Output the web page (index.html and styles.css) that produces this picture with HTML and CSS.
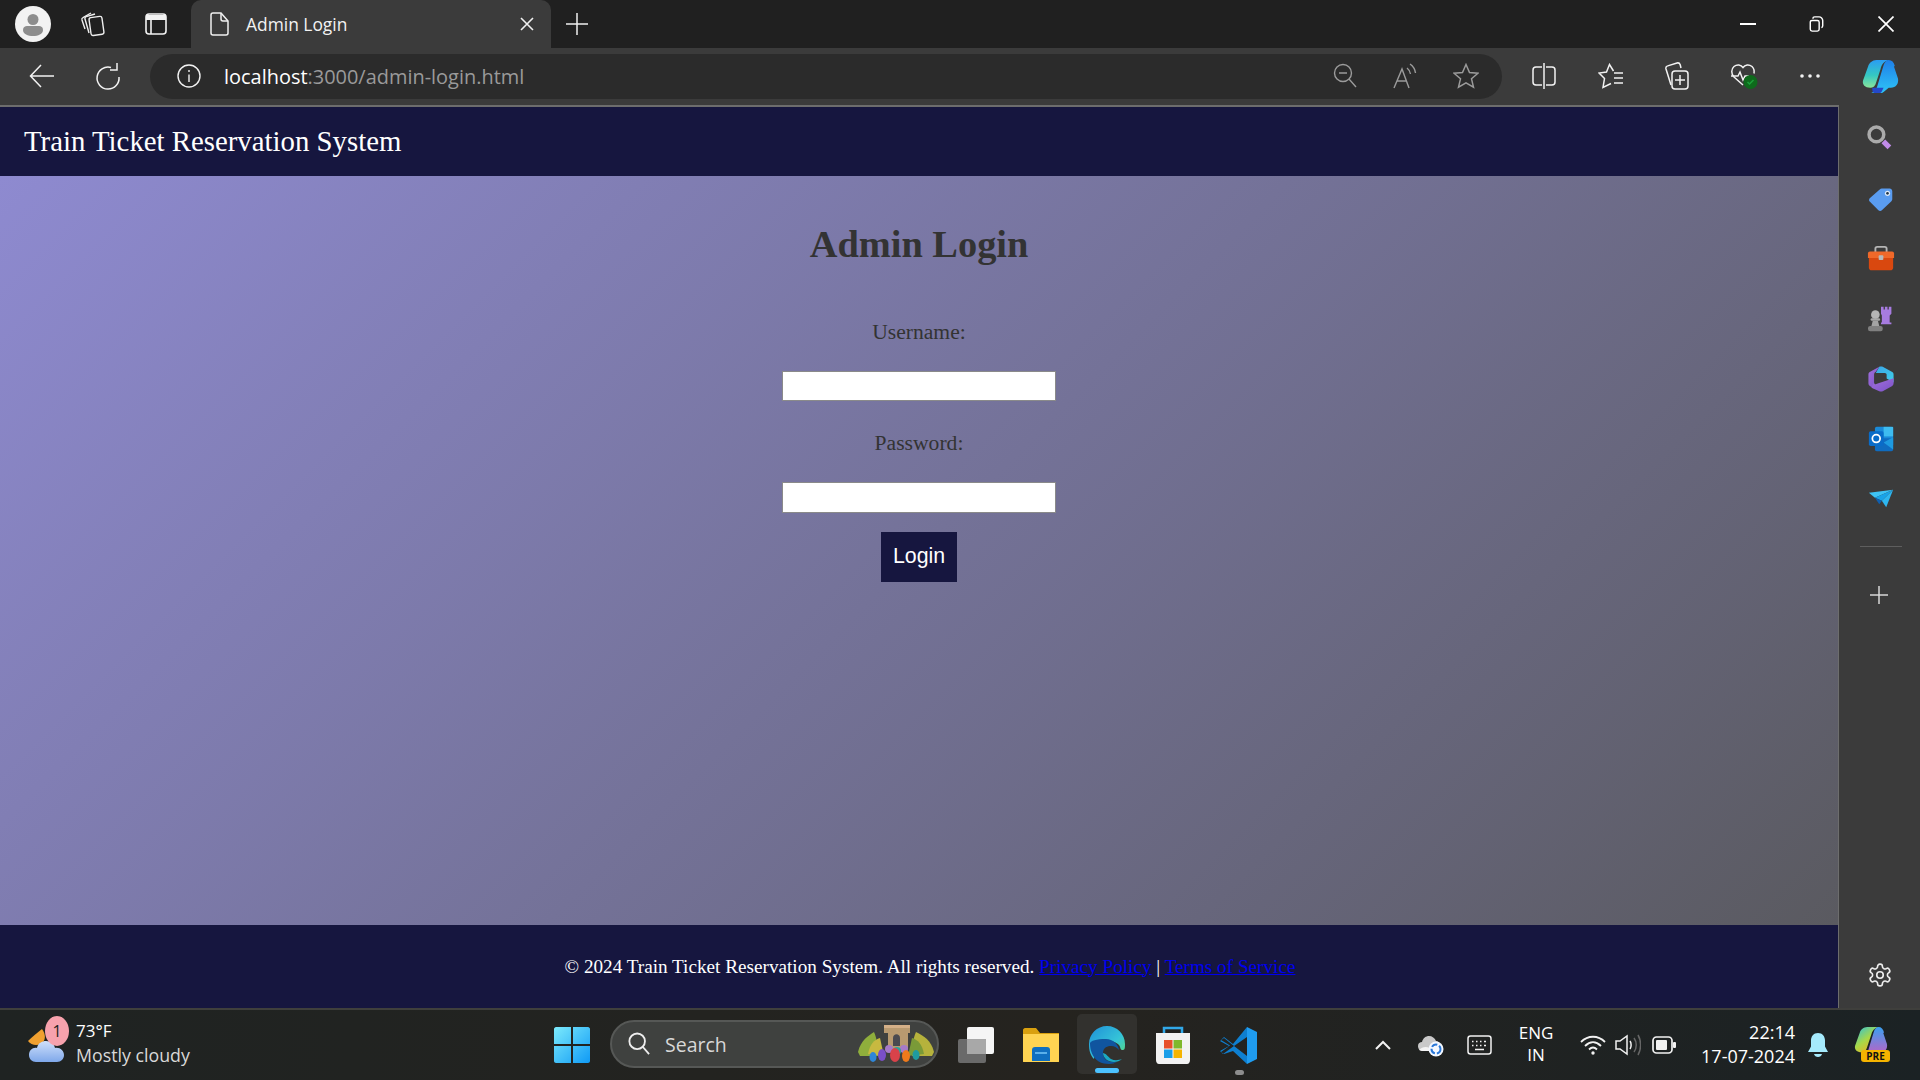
FILE: index.html
```html
<!DOCTYPE html>
<html lang="en">
<head>
<meta charset="utf-8">
<title>Admin Login</title>
<link rel="stylesheet" href="styles.css">
</head>
<body>
<header class="tabstrip">
  <span class="slot profile"><svg width="36" height="36" viewBox="0 0 36 36"><circle cx="18" cy="18" r="18" fill="#f2f2f2"/><circle cx="18" cy="13.5" r="5.5" fill="#8d8d8d"/><path d="M8 24c0-3 2-4 4-4h12c2 0 4 1 4 4 0 4-5 6-10 6s-10-2-10-6z" fill="#8d8d8d"/></svg></span>
  <span class="slot workspaces"><svg width="26" height="28" viewBox="0 0 26 28" fill="none" stroke="#eee" stroke-width="1.4"><rect x="10" y="7" width="13" height="18" rx="2" transform="rotate(-8 16 16)"/><path d="M9 23 5 9c-.3-1 .2-2 1.200-2.300L15 4"/><path d="M5 19 2 10c-.3-1 .1-2 1-2.400L11 3"/></svg></span>
  <span class="slot tabactions"><svg width="24" height="26" viewBox="0 0 24 26" fill="none" stroke="#f2f2f2" stroke-width="1.600"><rect x="2" y="3" width="20" height="20" rx="3"/><path d="M2 6.500h20" stroke-width="5"/><path d="M7 8v15"/></svg></span>
  <div class="tab">
    <svg class="tab-file" width="20" height="26" viewBox="0 0 20 26" fill="none" stroke="#f0f0f0" stroke-width="1.500"><path d="M3 2h8l7 8v12c0 1.200-.8 2-2 2H3c-1.200 0-2-.8-2-2V4c0-1.200.8-2 2-2z"/><path d="M11 2v6c0 1.200.8 2 2 2h5"/></svg>
    <span class="tab-title">Admin Login</span>
    <svg class="tab-close" width="14" height="14" viewBox="0 0 14 14" stroke="#f0f0f0" stroke-width="1.600"><path d="M1 1l12 12M13 1 1 13"/></svg>
  </div>
  <span class="slot newtab"><svg width="22" height="22" viewBox="0 0 22 22" stroke="#f0f0f0" stroke-width="1.500"><path d="M11 0v22M0 11h22"/></svg></span>
  <span class="slot caption cap-min"><svg width="16" height="2" viewBox="0 0 16 2"><path d="M0 1h16" stroke="#fff" stroke-width="2"/></svg></span>
  <span class="slot caption"><svg width="15" height="16" viewBox="0 0 16 18" fill="none" stroke="#fff" stroke-width="1.600"><rect x="1" y="5" width="10" height="12" rx="2"/><path d="M4 3c0-1 1-2 2-2h5c2 0 4 2 4 4v6c0 1-.5 2-1.500 2"/></svg></span>
  <span class="slot caption"><svg width="16" height="16" viewBox="0 0 16 16" stroke="#fff" stroke-width="1.700"><path d="M.5.5l15 15M15.500.5l-15 15"/></svg></span>
</header>

<nav class="toolbar">
  <span class="slot back"><svg width="26" height="24" viewBox="0 0 26 24" fill="none" stroke="#f2f2f2" stroke-width="1.500"><path d="M25 12H2M12 1 1.500 12 12 23"/></svg></span>
  <span class="slot reload"><svg width="26" height="28" viewBox="0 0 26 28" fill="none" stroke="#f2f2f2" stroke-width="1.500"><path d="M16 5.500A11 11 0 1 0 24 15"/><path d="M22 1v7h-7"/></svg></span>
  <div class="address">
    <svg class="addr-info" width="24" height="24" viewBox="0 0 24 24" fill="none" stroke="#f2f2f2" stroke-width="1.400"><circle cx="12" cy="12" r="11"/><path d="M12 10.500V18M12 6v2"/></svg>
    <span class="url"><span class="url-host">localhost</span>:3000/admin-login.html</span>
    <svg class="addr-zoom" width="24" height="26" viewBox="0 0 24 26" fill="none" stroke="#9b9b9b" stroke-width="1.400"><circle cx="10" cy="10" r="8.500"/><path d="M6 10h8M16 16l7 8"/></svg>
    <svg class="addr-read" width="26" height="26" viewBox="0 0 26 26" fill="none" stroke="#9b9b9b" stroke-width="1.400"><path d="M1 25 9 6l7 19M4 18h9"/><path d="M14 5c2 1.500 3 3 3.500 6M17 1c3 2 5 5 5.500 9"/></svg>
    <svg class="addr-star" width="26" height="26" viewBox="0 0 26 26" fill="none" stroke="#9b9b9b" stroke-width="1.500"><path d="m13 1.500 3.500 8 8.500.7-6.500 5.600 2 8.400-7.500-4.400-7.500 4.400 2-8.400L1 10.200l8.500-.7z"/></svg>
  </div>
  <span class="slot split"><svg width="24" height="26" viewBox="0 0 24 26" fill="none" stroke="#f2f2f2" stroke-width="1.500"><path d="M10 4H4c-1.600 0-3 1-3 3v12c0 2 1.400 3 3 3h6M14 4h6c1.600 0 3 1 3 3v12c0 2-1.400 3-3 3h-6"/><path d="M12 0v26"/></svg></span>
  <span class="slot tool"><svg width="26" height="26" viewBox="0 0 26 26" fill="none" stroke="#f2f2f2" stroke-width="1.500"><path d="M15.500 8 11.500 1.500 8.500 9 1 10l5.500 5.500L5 24.500l8-4"/><path d="M16 10h9M16 15h9M16 20h9"/></svg></span>
  <span class="slot tool"><svg width="26" height="28" viewBox="0 0 26 28" fill="none" stroke="#f2f2f2" stroke-width="1.500"><path d="M7 23 2 7c-.4-1.500.3-2.700 1.700-3.100L13 1c1.500-.4 2.700.4 3.200 1.700L17 6"/><rect x="8" y="9" width="16" height="18" rx="3"/><path d="M16 13v10M11 18h10"/></svg></span>
  <span class="slot tool"><svg width="28" height="28" viewBox="0 0 28 28" fill="none" stroke="#f2f2f2" stroke-width="1.500"><path d="M13 23 4 15C1 12 1 7 4 4.500s7-2 9 1c2-3 6-3.500 9-1 2 2 2.500 4.500 2 7"/><path d="M1 14h7l2-4 3 8 2-4h4"/><circle cx="20.500" cy="20" r="7" fill="#0e6a1c" stroke="none"/><path d="m17.500 20 2 2 4-4" stroke="#1ca03a"/></svg></span>
  <span class="slot tool"><svg width="20" height="4" viewBox="0 0 20 4" fill="#f2f2f2"><circle cx="2" cy="2" r="1.800"/><circle cx="10" cy="2" r="1.800"/><circle cx="18" cy="2" r="1.800"/></svg></span>
  <span class="slot copilot"><svg width="37" height="33" viewBox="0 0 36 32"><defs><linearGradient id="cpa" x1="0" y1="0" x2="0" y2="1"><stop offset="0" stop-color="#2a9df4"/><stop offset=".55" stop-color="#35c8c2"/><stop offset="1" stop-color="#8ae59a"/></linearGradient><linearGradient id="cpb" x1="0" y1="0" x2="0" y2="1"><stop offset="0" stop-color="#1f7fe8"/><stop offset="1" stop-color="#2ec4f7"/></linearGradient></defs><path d="M8 27c-5 0-8-3-7-7L6 6c1-3 4-6 8-6h12c-4 1-7 4-8 9l-4 12c-1 4-3 6-6 6z" fill="url(#cpa)"/><path d="M26 0c3 0 5 2 6 6h-1l4 12c1 5-2 9-7 9h-2l-5 4c-1 1-2 1-3 1H9c3-1 5-3 6-7l6-20c1-3 3-5 5-5z" fill="url(#cpb)"/><path d="M10 27h11l-2 4c-.6.8-1 1-2 1H12c-2 0-2-3-2-5z" fill="#2448c8"/></svg></span>
</nav>

<div class="workspace">
  <div class="viewport">
    <div class="site-nav">Train Ticket Reservation System</div>
    <main class="site-main">
      <h2 class="login-title">Admin Login</h2>
      <form class="login-form">
        <label class="login-label" for="user">Username:</label>
        <input class="login-input" id="user" type="text">
        <label class="login-label" for="pass">Password:</label>
        <input class="login-input" id="pass" type="password">
        <button class="login-button" type="button">Login</button>
      </form>
    </main>
    <footer class="site-footer"><p class="footer-text">© 2024 Train Ticket Reservation System. All rights reserved. <a class="site-link" href="#privacy">Privacy Policy</a> | <a class="site-link" href="#terms">Terms of Service</a></p></footer>
  </div>
  <aside class="sidebar">
    <svg class="side-icon side-search" width="26" height="26" viewBox="0 0 30 30" fill="none"><circle cx="12" cy="12" r="8.500" stroke="#aaa" stroke-width="4"/><path d="m20 20 7 7" stroke="#c08be8" stroke-width="6"/></svg>
    <svg class="side-icon side-tag" width="26" height="26" viewBox="0 0 30 30"><path d="M16 3h9c1.500 0 3 1.500 3 3v9c0 1-.5 2-1 2.500L16 28c-1 1-3 1-4 0L2 18c-1-1-1-3 0-4L13.500 4c.7-.6 1.500-1 2.500-1z" fill="#5a9cf0"/><circle cx="22.500" cy="8.500" r="3" fill="#dce9f8"/><circle cx="22.500" cy="8.500" r="1.500" fill="#234"/></svg>
    <svg class="side-wide" width="28" height="28" viewBox="0 0 30 30"><path d="M9 8V4c0-1 1-2 2-2h8c1 0 2 1 2 2v4" fill="none" stroke="#b5b5b5" stroke-width="2"/><path d="M3 7h24c1 0 2 1 2 2v5H1V9c0-1 1-2 2-2z" fill="#f0692a"/><path d="M2 14h26v10c0 2-1 3-3 3H5c-2 0-3-1-3-3z" fill="#d9480f"/><rect x="12.500" y="11" width="5" height="5" rx="1" fill="#b9b9b9"/></svg>
    <svg class="side-icon" width="28" height="26" viewBox="0 0 32 30"><path d="M16 1h3v3h1.500V1h3v3H25V1h3v8l-2 2v8h2v2H16v-2h1V11l-1-2z" fill="#a77ce0"/><circle cx="9.500" cy="10" r="5" fill="#b5b5b5"/><rect x="4" y="14" width="11" height="3" rx="1.500" fill="#a8a8a8"/><path d="M6.500 17h6l1.500 6H5z" fill="#a4a4a4"/><rect x="1" y="23" width="17" height="6" rx="2.500" fill="#808080"/></svg>
    <svg class="side-icon" width="26" height="26" viewBox="0 0 30 30"><defs><linearGradient id="msa" x1="0" y1="0" x2="1" y2="1"><stop offset="0" stop-color="#3ba6e8"/><stop offset="1" stop-color="#3fd0e8"/></linearGradient><linearGradient id="msb" x1="0" y1="0" x2="1" y2="1"><stop offset="0" stop-color="#a170dc"/><stop offset="1" stop-color="#7c52c8"/></linearGradient></defs><path d="M13 1 2 7c-1 .7-1.500 1.500-1.500 3v10c0 1.500.5 2.300 1.500 3l5 3V10c0-2 1-3 2-3.500z" fill="url(#msb)"/><path d="M13 1c1-.6 3-.6 4 0l11 6c1 .7 1.500 1.500 1.500 3v9l-8-4.500V10c0-1-1-2-2-2H9z" fill="url(#msa)"/><path d="M7 19c0 3 3 2 5 1l17.500-6v6c0 1.500-.5 2.300-1.500 3l-11 6c-1 .6-3 .6-4 0L4 25z" fill="url(#msb)"/></svg>
    <svg class="side-icon" width="26" height="26" viewBox="0 0 30 30"><rect x="8" y="1" width="21" height="22" rx="2" fill="#1a8ad8"/><rect x="18" y="1" width="11" height="11" fill="#3ebcf0"/><path d="M8 14h21v13c0 1-1 2-2 2H10c-1 0-2-1-2-2z" fill="#0f6cc0"/><path d="M18 19l11-6v14z" fill="#1e9ae0"/><rect x="1" y="6" width="17" height="17" rx="2" fill="#0a6cc8"/><circle cx="9.500" cy="14.500" r="4.500" fill="none" stroke="#fff" stroke-width="2"/></svg>
    <svg class="side-send" width="26" height="19" viewBox="0 0 30 26" preserveAspectRatio="none"><path d="M1 5 29 1 8 12z" fill="#3ec3f5"/><path d="M8 12 29 1 16 16z" fill="#19a3e8"/><path d="M8 12l5 9 3-5z" fill="#0e5fb0"/><path d="M16 16 29 1l-8 24z" fill="#2eb6f0"/></svg>
    <span class="side-divider"></span>
    <svg class="side-plus" width="20" height="20" viewBox="0 0 20 20" stroke="#d8d8d8" stroke-width="1.500"><path d="M10 1v18M1 10h18"/></svg>
    <svg class="side-gear" width="26" height="26" viewBox="0 0 24 24" fill="none" stroke="#ededed" stroke-width="1.500"><path d="M12.220 2h-.44a2 2 0 0 0-2 2v.18a2 2 0 0 1-1 1.730l-.43.25a2 2 0 0 1-2 0l-.15-.08a2 2 0 0 0-2.730.73l-.22.38a2 2 0 0 0 .73 2.730l.15.1a2 2 0 0 1 1 1.720v.51a2 2 0 0 1-1 1.740l-.15.09a2 2 0 0 0-.73 2.730l.22.38a2 2 0 0 0 2.730.73l.15-.08a2 2 0 0 1 2 0l.43.25a2 2 0 0 1 1 1.730V20a2 2 0 0 0 2 2h.44a2 2 0 0 0 2-2v-.18a2 2 0 0 1 1-1.730l.43-.25a2 2 0 0 1 2 0l.15.08a2 2 0 0 0 2.730-.73l.22-.39a2 2 0 0 0-.73-2.730l-.15-.08a2 2 0 0 1-1-1.740v-.5a2 2 0 0 1 1-1.740l.15-.09a2 2 0 0 0 .73-2.730l-.22-.38a2 2 0 0 0-2.730-.73l-.15.08a2 2 0 0 1-2 0l-.43-.25a2 2 0 0 1-1-1.730V4a2 2 0 0 0-2-2z"/><circle cx="12" cy="12" r="3"/></svg>
  </aside>
</div>

<div class="taskbar">
  <div class="weather">
    <span class="weather-icon">
      <svg width="38" height="36" viewBox="0 0 38 36"><path d="M14 2C9 6 4 10 0 14c3 4 8 5 13 3 5-3 5-10 1-15z" fill="#f0a030"/><defs><linearGradient id="wc" x1="0" y1="0" x2="0" y2="1"><stop offset="0" stop-color="#cfe0fb"/><stop offset="1" stop-color="#7fa8ea"/></linearGradient></defs><path d="M8 35c-4 0-7-3-7-7 0-5 4-8 8-7 1-5 5-7 9-7 5 0 8 3 9 7 5-1 9 3 9 7 0 4-3 7-7 7z" fill="url(#wc)"/></svg>
      <span class="weather-badge">1</span>
    </span>
    <span class="weather-text"><span class="weather-temp">73°F</span><span class="weather-desc">Mostly cloudy</span></span>
  </div>
  <svg class="tb-start" width="36" height="36" viewBox="0 0 36 36"><defs><linearGradient id="st" x1="0" y1="0" x2="1" y2="1"><stop offset="0" stop-color="#7ceafc"/><stop offset="1" stop-color="#0f9af5"/></linearGradient></defs><path d="M2 0h15v17H0V2c0-1 1-2 2-2zM19 0h15c1 0 2 1 2 2v15H19zM0 19h17v17H2c-1 0-2-1-2-2zM19 19h17v15c0 1-1 2-2 2H19z" fill="url(#st)"/></svg>
  <div class="tb-search">
    <svg class="search-glass" width="22" height="24" viewBox="0 0 24 26" fill="none" stroke="#eee" stroke-width="2"><circle cx="10" cy="10" r="8.500"/><path d="m16 16 7 8"/></svg>
    <span class="search-text">Search</span>
    <svg class="search-art" width="76" height="38" viewBox="0 0 76 38"><path d="M0 28C3 16 10 12 16 8c3 6 4 16 4 24H2z" fill="#8fae3c"/><path d="M76 28C73 16 66 12 58 8c-3 6-4 16-4 24h20z" fill="#b6b23c"/><path d="M10 30c2-10 6-14 12-16l4 18z" fill="#c7b940"/><path d="M66 30c-2-10-6-14-12-16l-4 18z" fill="#7a9a38"/><path d="M26 1h26v8h-2v16H30V9h-4z" fill="#b89a70"/><path d="M26 1h26v3H26z" fill="#d4b088"/><path d="M35 22V14c0-5 7-5 7 0v8z" fill="#4a4a50"/><ellipse cx="31" cy="25" rx="4" ry="4" fill="#a77ac8"/><ellipse cx="46" cy="25" rx="4" ry="4" fill="#a77ac8"/><ellipse cx="39" cy="27" rx="4" ry="4" fill="#2aa49c"/><ellipse cx="24" cy="31" rx="4" ry="6" fill="#7a4fc8"/><ellipse cx="15" cy="33" rx="3.500" ry="5" fill="#2f86d8"/><ellipse cx="37" cy="31" rx="5" ry="7" fill="#d8424a"/><ellipse cx="48" cy="32" rx="4" ry="6" fill="#ee7a1c"/><ellipse cx="58" cy="31" rx="3.500" ry="5" fill="#1f9aa0"/></svg>
  </div>
  <svg class="tb-app tb-task" width="36" height="36" viewBox="0 0 36 36"><rect x="0" y="12" width="28" height="24" rx="2" fill="#6a6a6a"/><rect x="9" y="0" width="27" height="27" rx="2" fill="#f5f5f5"/><rect x="9" y="12" width="19" height="15" fill="#a8a8a8"/></svg>
  <svg class="tb-app tb-files" width="36" height="34" viewBox="0 0 36 34"><path d="M2 0h11l4 5h19v29H0V2c0-1 1-2 2-2z" fill="#d9a00f"/><path d="M0 6h36v27c0 .6-.5 1-1 1H1c-.5 0-1-.4-1-1z" fill="#ffd452"/><path d="M9 33V22c0-2 1-3 3-3h12c2 0 3 1 3 3v11z" fill="#0f6fc0"/><rect x="12" y="24" width="12" height="2" fill="#5ab0ea"/></svg>
  <div class="tb-edge">
    <svg width="36" height="38" viewBox="0 0 36 38"><defs><linearGradient id="eda" x1="0" y1="0" x2="1" y2="1"><stop offset="0" stop-color="#1f8fd8"/><stop offset=".6" stop-color="#35c4d8"/><stop offset="1" stop-color="#5edc6c"/></linearGradient></defs><path d="M18 0C8 0 0 8 0 18c0 6 1 11 5 15 1-7 4-14 12-17 6-2 11 1 13 3 2 3 1 5 4 5 2 0 2-3 2-6C36 8 28 0 18 0z" fill="url(#eda)"/><path d="M1 17c0 10 5 21 19 21 3 0 6-1 8-2-6 1-14-1-14-9 0-6 5-7 8-7 4 0 6 2 8 4-1-6-6-11-13-11C7 13 2 15 1 17z" fill="#10559f"/><path d="M14 27c0 5 5 9 11 9 3 0 6-1 8-3-3 1-7 2-11 0-3-2-4-5-8-6z" fill="#1ba9c4"/></svg>
    <span class="edge-line"></span>
  </div>
  <svg class="tb-app tb-store" width="36" height="38" viewBox="0 0 36 38"><path d="M9 8V2h18v6" fill="none" stroke="#31a8e8" stroke-width="2.500"/><path d="M1 7h34v27c0 2-1 4-3 4H4c-2 0-3-2-3-4z" fill="#f2f2f2"/><rect x="9" y="14" width="8.500" height="8.500" fill="#e8502a"/><rect x="18.500" y="14" width="8.500" height="8.500" fill="#7fb82c"/><rect x="9" y="23.500" width="8.500" height="8.500" fill="#1a9ee8"/><rect x="18.500" y="23.500" width="8.500" height="8.500" fill="#f5b400"/></svg>
  <div class="tb-code">
    <svg width="37" height="37" viewBox="0 0 37 37"><path d="M27 0 37 5v27l-10 5z" fill="#1f9cf0"/><path d="M27 0v10L14 19 4 11 0 14l9 5-9 5 3 3 11-8 13 10 0 8-14-13L4 27 1 25l9-6.500L1 13l3-3 9 7z" fill="#0e7fd0"/></svg>
    <span class="code-dot"></span>
  </div>
  <div class="tray">
    <svg class="tr-chev" width="16" height="10" viewBox="0 0 16 10" fill="none" stroke="#f2f2f2" stroke-width="2"><path d="m1 9 7-7 7 7"/></svg>
    <svg class="tr-cloud" width="26" height="24" viewBox="0 0 26 24"><path d="M5 18c-3 0-5-2-5-5s2-4 4-4c1-4 4-6 7-6s6 2 7 5c2 0 4 2 4 4v6z" fill="#c9c9c9"/><path d="M1 17c4-4 10-4 14 1H4z" fill="#f4f4f4"/><circle cx="18" cy="16" r="7.500" fill="#f4f8ff"/><circle cx="18" cy="16" r="4.500" fill="none" stroke="#2a78d8" stroke-width="2" stroke-dasharray="6 2"/></svg>
    <svg class="tr-kbd" width="25" height="20" viewBox="0 0 25 20" fill="none" stroke="#f2f2f2" stroke-width="1.500"><rect x="1" y="1" width="23" height="18" rx="2.500"/><path d="M5 6.500h1.500M9 6.500h1.500M13 6.500h1.500M17 6.500h2M5 10.500h1.500M9 10.500h1.500M13 10.500h1.500M17 10.500h2M8 14.500h9"/></svg>
    <span class="tr-lang">ENG<br>IN</span>
    <svg class="tr-wifi" width="26" height="20" viewBox="0 0 26 20" fill="none" stroke="#f2f2f2" stroke-width="1.800"><path d="M1 7c7-7 17-7 24 0M5 11c5-5 11-5 16 0M9 14.500c2.500-2.500 5.500-2.500 8 0"/><circle cx="13" cy="18" r="1.700" fill="#f2f2f2" stroke="none"/></svg>
    <svg class="tr-sound" width="26" height="22" viewBox="0 0 26 22" fill="none" stroke="#f2f2f2" stroke-width="1.500"><path d="M1 7v8h4l7 5V2L5 7z"/><path d="M15 7c1.500 2 1.500 6 0 8"/><path d="M19 4c3 4 3 10 0 14M23 1c3.500 6 3.500 14 0 20" stroke="#666"/></svg>
    <svg class="tr-batt" width="24" height="18" viewBox="0 0 24 18"><rect x="1" y="1" width="19" height="16" rx="3.500" fill="none" stroke="#f2f2f2" stroke-width="1.700"/><rect x="4" y="4" width="11" height="10" rx="1" fill="#f2f2f2"/><rect x="21" y="6" width="3" height="6" rx="1" fill="#f2f2f2"/></svg>
    <span class="tr-clock">22:14<br>17-07-2024</span>
    <svg class="tr-bell" width="20" height="25" viewBox="0 0 20 25"><path d="M10 0c4.500 0 7 3.500 7 7.500v6l3 5.500H0l3-5.500v-6C3 3.500 5.500 0 10 0z" fill="#a5eafc"/><path d="M6 21h8c-.5 2-2 3-4 3s-3.500-1-4-3z" fill="#a5eafc"/></svg>
    <span class="tr-copilot">
      <svg width="36" height="30" viewBox="0 0 36 32"><defs><linearGradient id="cpc" x1="0" y1="0" x2=".7" y2="1"><stop offset="0" stop-color="#2ac0e0"/><stop offset=".55" stop-color="#a8d848"/><stop offset="1" stop-color="#f0b020"/></linearGradient><linearGradient id="cpd" x1="0" y1="0" x2="0" y2="1"><stop offset="0" stop-color="#3aa0f0"/><stop offset="1" stop-color="#c85cc0"/></linearGradient></defs><path d="M8 27c-5 0-8-3-7-7L6 6c1-3 4-6 8-6h12c-4 1-7 4-8 9l-4 12c-1 4-3 6-6 6z" fill="url(#cpc)"/><path d="M26 0c3 0 5 2 6 6h-1l4 12c1 5-2 9-7 9h-2l-5 4c-1 1-2 1-3 1H9c3-1 5-3 6-7l6-20c1-3 3-5 5-5z" fill="url(#cpd)"/></svg>
      <span class="pre-badge">PRE</span>
    </span>
  </div>
</div>
</body>
</html>
```
FILE: styles.css
```css
* { box-sizing: border-box; }
html, body { margin: 0; height: 100%; }
body {
  width: 1920px;
  height: 1080px;
  overflow: hidden;
  display: flex;
  flex-direction: column;
  font-family: "Open Sans", "Noto Sans", sans-serif;
  background: #3b3b3b;
}
svg { display: block; flex: none; }
.slot { display: flex; align-items: center; justify-content: center; flex: none; }

/* tab strip */
.tabstrip { height: 48px; flex: none; display: flex; align-items: center; padding-left: 15px; background: #202020; }
.profile { width: 36px; }
.workspaces { width: 40px; margin-left: 22px; }
.tabactions { width: 40px; margin-left: 23px; }
.tab {
  width: 360px; height: 48px; margin-left: 15px;
  display: flex; align-items: center;
  background: #3b3b3b; border-radius: 10px 10px 0 0;
  padding: 0 17px 0 19px;
}
.tab-title { margin-left: 16px; font-size: 17.400px; color: #f2f2f2; flex: 1; }
.newtab { width: 40px; margin-left: 6px; }
.caption { width: 69px; height: 48px; }
.cap-min { margin-left: auto; }

/* toolbar */
.toolbar { height: 57px; flex: none; display: flex; align-items: center; padding: 0 0 1px 22px; background: #3b3b3b; }
.back { width: 40px; }
.reload { width: 40px; margin-left: 26px; }
.address {
  width: 1352px; height: 45px; margin-left: 22px;
  display: flex; align-items: center;
  background: #2b2b2b; border-radius: 23px;
  padding: 0 0 1px 27px;
}
.url { margin: 1px 0 0 23px; font-size: 19.950px; color: #9a9a9a; }
.url-host { color: #fff; }
.addr-zoom { margin-left: auto; }
.addr-read { margin-left: 36px; }
.addr-star { margin-left: 34px; margin-right: 23px; }
.split { width: 40px; margin-left: 22px; }
.tool { width: 40px; margin-left: 26.500px; }
.copilot { width: 40px; margin-left: 30px; }

/* page + sidebar */
.workspace { flex: 1; display: flex; min-height: 0; }
.viewport {
  width: 1839px; display: flex; flex-direction: column;
  border-top: 2px solid #6d6d6d; border-right: 1px solid #6d6d6d;
  font-family: "Liberation Serif", serif;
}
.site-nav { height: 69px; flex: none; display: flex; align-items: center; padding-left: 24px; background: #16163f; color: #fff; font-size: 28.800px; }
.site-main {
  flex: 1; padding-top: 46px; text-align: center;
  background: linear-gradient(135deg, #8e8ad0 0%, #5a5a60 100%);
  color: #333;
}
.login-title { margin: 0; font-size: 38.400px; font-weight: bold; line-height: 44px; }
.login-form { display: flex; flex-direction: column; align-items: center; margin-top: 53.600px; }
.login-label { display: block; font-size: 21.600px; line-height: 25px; }
.login-input {
  display: block; width: 274.500px; height: 30.600px; padding: 0;
  margin: 26px 0 29.800px;
  background: #fff; border: 1px solid #8a8a8a;
}
.login-input:last-of-type { margin-bottom: 19.400px; }
.login-button {
  width: 76px; height: 50px; padding: 0;
  border: 0; background: #16163f; color: #fff;
  font: 21.330px "Liberation Sans", Arial, sans-serif;
}
.site-footer {
  height: 83px; flex: none; display: flex; align-items: center; justify-content: center;
  padding-left: 22px;
  background: #16163f; color: #fff; font-size: 19.200px;
}
.footer-text { margin: 0; }
.site-link { color: #0000ee; text-decoration: underline; }

/* sidebar */
.sidebar { flex: 1; display: flex; flex-direction: column; align-items: center; padding: 17px 0 0 3px; gap: 30px; background: #3b3b3b; }
.side-icon { margin: 2px 0; }
.side-wide { margin: 1px 0; }
.side-search { margin-left: -4px; }
.side-tag { margin-top: 4px; }
.side-send { margin: 4.500px 0 5.500px; }
.side-divider { width: 42px; height: 1px; margin-top: 3px; background: #5e5e5e; }
.side-plus { margin-left: -4px; margin-top: 8px; margin-bottom: auto; }
.side-gear { margin-left: -2px; margin-bottom: 20px; }

/* taskbar */
.taskbar {
  height: 72px; flex: none; display: flex; align-items: center; color: #fff;
  border-top: 2px solid #3f3f3c;
  background: linear-gradient(90deg, #1f2322 0%, #25231f 55%, #1b2224 100%);
}
.weather { width: 554px; flex: none; display: flex; align-items: center; padding-left: 28px; }
.weather-icon { position: relative; width: 38px; height: 36px; }
.weather-badge {
  position: absolute; left: 17px; top: -11px; width: 24px; height: 30px;
  display: flex; align-items: center; justify-content: center;
  border-radius: 50%; background: #f7a2ad; color: #222; font-size: 16px;
}
.weather-text { display: flex; flex-direction: column; margin-left: 10px; margin-top: -4px; }
.weather-temp { font-size: 17px; line-height: 24px; color: #fff; }
.weather-desc { font-size: 17.800px; line-height: 24px; color: #d8d8d8; }
.tb-search {
  width: 329px; height: 48px; margin-left: 20px; margin-top: -2px;
  display: flex; align-items: center; padding-left: 16px;
  border-radius: 24px; background: #3f413f; border: 2px solid #565856;
}
.search-text { margin-left: 15px; font-size: 19.500px; color: #d8d8d8; flex: 1; }
.search-art { margin-right: 3px; margin-top: -2px; }
.tb-task { margin-left: 19px; }
.tb-files { margin-left: 29px; }
.tb-edge {
  position: relative; width: 60px; height: 60px; margin-left: 18px; margin-top: -2px;
  display: flex; justify-content: center; padding-top: 12px;
  border-radius: 5px; background: #32312e;
}
.edge-line { position: absolute; left: 18px; bottom: 1px; width: 24px; height: 5px; border-radius: 3px; background: #4cc2ff; }
.tb-store { margin-left: 18px; }
.tb-code { position: relative; margin-left: 29px; }
.code-dot { position: absolute; left: 15px; bottom: -11px; width: 9px; height: 5px; border-radius: 3px; background: #8d8d8d; }
.tray { margin-left: auto; display: flex; align-items: center; height: 100%; width: 545px; }
.tr-cloud { margin-left: 27px; }
.tr-kbd { margin-left: 23px; }
.tr-lang { width: 40px; margin-left: 24px; text-align: center; font-size: 17px; line-height: 22px; margin-top: -2px; }
.tr-wifi { margin-left: 24px; }
.tr-sound { margin-left: 9px; }
.tr-batt { margin-left: 11px; }
.tr-clock { width: 119px; text-align: right; font-size: 18px; line-height: 24px; margin-top: -2px; }
.tr-bell { margin-left: 13px; }
.tr-copilot { position: relative; margin-left: 25px; width: 36px; height: 36px; }
.pre-badge {
  position: absolute; left: 8px; top: 23px; width: 29px; height: 12px;
  display: flex; align-items: center; justify-content: center;
  border-radius: 3px; background: #f5b400; color: #111; font-size: 10px; font-weight: 700;
}
```
